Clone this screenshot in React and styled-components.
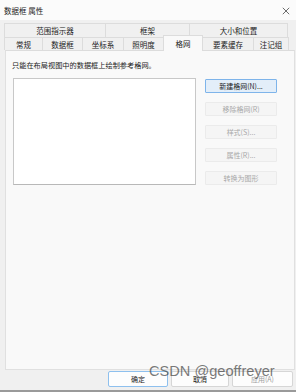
import React from "react";
import styled, { createGlobalStyle } from "styled-components";

const Global = createGlobalStyle`
  html, body { margin: 0; padding: 0; }
  body {
    width: 296px; height: 392px; overflow: hidden;
    background: #f0f0f0;
    font-family: "Noto Sans CJK SC", "Noto Sans", sans-serif;
  }
`;

const Window = styled.div`
  position: relative;
  width: 296px;
  height: 392px;
  box-sizing: border-box;
  display: flex;
  flex-direction: column;
  background: #f0f0f0;
  border-bottom: 2px solid #9a9a9a;
`;

const TitleBar = styled.div`
  height: 20px;
  flex: none;
  display: flex;
  align-items: center;
  justify-content: space-between;
  padding: 0 6px 0 4px;
  background: #fbfbfb;
  font-size: 7.5px;
  color: #1a1a1a;
`;

const Close = styled.svg`
  width: 8px;
  height: 8px;
  margin-top: 2px;
`;

const Tabs = styled.div`
  margin-top: 3px;
  padding-left: 4px;
  display: flex;
  flex-direction: column;
`;

const TabRow = styled.div`
  display: flex;
  height: ${(p) => p.$h}px;
`;

const Tab = styled.div`
  box-sizing: border-box;
  width: ${(p) => p.$w}px;
  flex: none;
  display: flex;
  align-items: center;
  justify-content: center;
  font-size: 7.5px;
  color: #222;
  background: ${(p) => (p.$active ? "#f9f9f9" : "#f0f0f0")};
  border: 1px solid #dcdcdc;
  border-bottom: none;
  border-left-width: ${(p) => (p.$first ? 1 : 0)}px;
  ${(p) =>
    p.$active &&
    `
    position: relative;
    z-index: 2;
    margin-top: -2px;
    height: 16px;
    border-left-width: 1px;
    margin-left: -1px;
    width: ${p.$w + 1}px;
  `}
`;

const Panel = styled.div`
  box-sizing: border-box;
  height: 320px;
  margin-left: 5px;
  margin-right: 1px;
  background: #f9f9f9;
  border: 1px solid #e0e0e0;
  border-top: 1px solid #dcdcdc;
  padding: 9px 6px 0 6px;
  display: flex;
  flex-direction: column;
`;

const Hint = styled.div`
  font-size: 7.2px;
  line-height: 10px;
  color: #222;
  height: 10px;
`;

const ContentRow = styled.div`
  display: flex;
  margin-top: 8px;
  padding-left: 1px;
  gap: 9px;
`;

const ListBox = styled.div`
  box-sizing: border-box;
  width: 183px;
  height: 107px;
  background: #ffffff;
  border: 1px solid #c8c8c8;
  border-bottom-color: #b8b8b8;
`;

const ButtonCol = styled.div`
  display: flex;
  flex-direction: column;
  gap: 9px;
  padding-top: 1px;
`;

const SideButton = styled.div`
  box-sizing: border-box;
  width: 72px;
  height: 14px;
  display: flex;
  align-items: center;
  justify-content: center;
  font-size: 7px;
  border-radius: 1px;
  color: ${(p) => (p.$disabled ? "#a8a8a8" : "#222")};
  background: ${(p) => (p.$primary ? "#e3eef9" : "#f5f5f5")};
  border: 1px solid ${(p) => (p.$primary ? "#7eb4ea" : "#ebebeb")};
`;

const Footer = styled.div`
  display: flex;
  justify-content: flex-end;
  gap: 3px;
  padding: 1px 3px 0 0;
`;

const FooterButton = styled.div`
  box-sizing: border-box;
  width: ${(p) => p.$w}px;
  height: 16px;
  display: flex;
  align-items: center;
  justify-content: center;
  font-size: 7px;
  color: ${(p) => (p.$disabled ? "#a0a0a0" : "#222")};
  background: #fdfdfd;
  border: 1px solid ${(p) => (p.$primary ? "#8ec0ee" : "#d6d6d6")};
  border-radius: 2px;
`;

const Watermark = styled.div`
  position: absolute;
  left: 149px;
  top: 364px;
  font-family: "Liberation Sans", Arial, sans-serif;
  font-size: 14.6px;
  line-height: 1;
  color: rgba(70, 70, 70, 0.72);
  white-space: nowrap;
  pointer-events: none;
`;

const topTabs = [
  { label: "范围指示器", w: 102 },
  { label: "框架", w: 84 },
  { label: "大小和位置", w: 98 },
];

const bottomTabs = [
  { label: "常规", w: 39 },
  { label: "数据框", w: 40 },
  { label: "坐标系", w: 41 },
  { label: "照明度", w: 40 },
  { label: "格网", w: 39, active: true },
  { label: "要素缓存", w: 51 },
  { label: "注记组", w: 35 },
];

const sideButtons = [
  { label: "新建格网(N)...", primary: true },
  { label: "移除格网(R)", disabled: true },
  { label: "样式(S)...", disabled: true },
  { label: "属性(R)...", disabled: true },
  { label: "转换为图形", disabled: true },
];

export default function App() {
  return (
    <>
      <Global />
      <Window>
        <TitleBar>
          <span>数据框 属性</span>
          <Close viewBox="0 0 10 10">
            <path d="M1 1 L9 9 M9 1 L1 9" stroke="#333" strokeWidth="0.9" fill="none" />
          </Close>
        </TitleBar>
        <Tabs>
          <TabRow $h={14}>
            {topTabs.map((t, i) => (
              <Tab key={t.label} $w={t.w} $first={i === 0}>
                {t.label}
              </Tab>
            ))}
          </TabRow>
          <TabRow $h={13}>
            {bottomTabs.map((t, i) => (
              <Tab key={t.label} $w={t.w} $first={i === 0} $active={t.active}>
                {t.label}
              </Tab>
            ))}
          </TabRow>
        </Tabs>
        <Panel>
          <Hint>只能在布局视图中的数据框上绘制参考格网。</Hint>
          <ContentRow>
            <ListBox />
            <ButtonCol>
              {sideButtons.map((b) => (
                <SideButton key={b.label} $primary={b.primary} $disabled={b.disabled}>
                  {b.label}
                </SideButton>
              ))}
            </ButtonCol>
          </ContentRow>
        </Panel>
        <Footer>
          <FooterButton $w={60} $primary>确定</FooterButton>
          <FooterButton $w={58}>取消</FooterButton>
          <FooterButton $w={61} $disabled>应用(A)</FooterButton>
        </Footer>
        <Watermark>CSDN @geoffreyer</Watermark>
      </Window>
    </>
  );
}
